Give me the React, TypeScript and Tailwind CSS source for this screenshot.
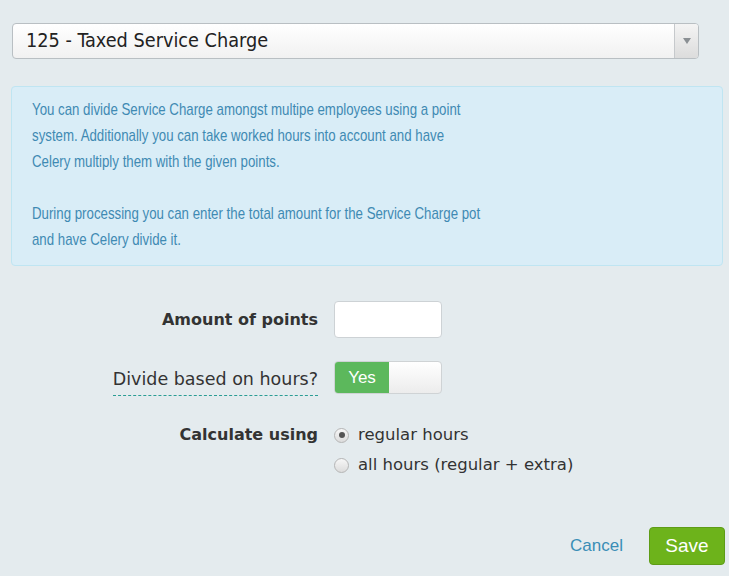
import React, { useState } from 'react'

export default function App() {
  const [hours, setHours] = useState<'regular' | 'all'>('regular')
  const [divide, setDivide] = useState(true)

  return (
    <div className="min-h-[576px] w-[729px] bg-[#e4ebee] pt-[23px] font-[family-name:'Liberation_Sans',Arial,sans-serif]">
      {/* Select */}
      <div className="ml-[12px] flex h-[36px] w-[687px] items-stretch overflow-hidden rounded-[4px] border border-[#b9bfc3] bg-gradient-to-b from-white to-[#f1f1f1]">
        <div className="flex flex-1 items-center pl-[13px] text-[19.7px] text-[#222] font-[family-name:'DejaVu_Sans_Condensed','DejaVu_Sans',sans-serif]">
          125 - Taxed Service Charge
        </div>
        <div className="flex w-[24px] items-center justify-center border-l border-[#c6c9cc] bg-gradient-to-b from-[#f4f4f4] to-[#dcdcdc]">
          <svg width="8" height="6" viewBox="0 0 8 6">
            <path d="M0 0h8L4 6z" fill="#8a8f93" />
          </svg>
        </div>
      </div>

      {/* Info */}
      <div className="ml-[11px] mt-[27px] w-[712px] rounded-[4px] border border-[#bfe5f2] bg-[#d9edf7] pb-[12px] pl-[20px] pr-[18px] pt-[10px] text-[17px] leading-[26px] text-[#3f8ab3]">
        <p className="origin-left scale-x-[0.78] whitespace-nowrap">
          You can divide Service Charge amongst multipe employees using a point
          <br />
          system. Additionally you can take worked hours into account and have
          <br />
          Celery multiply them with the given points.
        </p>
        <p className="mt-[26px] origin-left scale-x-[0.78] whitespace-nowrap">
          During processing you can enter the total amount for the Service Charge pot
          <br />
          and have Celery divide it.
        </p>
      </div>

      {/* Form */}
      <div className="mt-[35px] flex flex-col text-[#333] font-[family-name:'DejaVu_Sans',Verdana,sans-serif]">
        <div className="flex items-center">
          <label className="w-[318px] text-right text-[16px] font-bold">Amount of points</label>
          <input
            className="ml-[16px] h-[37px] w-[108px] rounded-[4px] border border-[#cdd2d5] bg-white px-2 outline-none"
            type="text"
          />
        </div>

        <div className="mt-[23px] flex items-center">
          <div className="flex w-[318px] justify-end">
            <span className="translate-y-[4px] border-b border-dashed border-[#2a9d94] pb-[4px] text-[17.5px] leading-[24px]">
              Divide based on hours?
            </span>
          </div>
          <button
            onClick={() => setDivide(!divide)}
            className="ml-[16px] flex h-[33px] w-[108px] overflow-hidden rounded-[4px] border border-[#cfd3d5] bg-gradient-to-b from-white to-[#ececec]"
          >
            <span className="flex h-full w-[54px] items-center justify-center bg-[#5cb85c] text-[17px] text-white font-[family-name:'Liberation_Sans',Arial,sans-serif]">
              Yes
            </span>
          </button>
        </div>

        <div className="mt-[31px] flex items-start">
          <label className="w-[318px] text-right text-[16px] font-bold leading-[20px]">Calculate using</label>
          <div className="ml-[16px] flex flex-col gap-[10px] text-[16.5px]">
            <label className="flex items-center gap-[9px] leading-[20px]" onClick={() => setHours('regular')}>
              <Radio checked={hours === 'regular'} />
              regular hours
            </label>
            <label className="flex items-center gap-[9px] leading-[20px]" onClick={() => setHours('all')}>
              <Radio checked={hours === 'all'} />
              all hours (regular + extra)
            </label>
          </div>
        </div>
      </div>

      {/* Actions */}
      <div className="mt-[52px] flex items-center justify-end pr-[4px]">
        <button className="mr-[26px] text-[17px] text-[#3a8eb6]">Cancel</button>
        <button className="h-[38px] w-[76px] rounded-[4px] border border-[#5e9c16] bg-[#6db31b] text-[19px] text-white">
          Save
        </button>
      </div>
    </div>
  )
}

function Radio({ checked }: { checked: boolean }) {
  return (
    <span className="flex h-[15px] w-[15px] shrink-0 items-center justify-center rounded-full border border-[#b5b5b5] bg-gradient-to-b from-[#f7f7f7] to-[#dcdcdc]">
      {checked && <span className="h-[6px] w-[6px] rounded-full bg-[#555]" />}
    </span>
  )
}
